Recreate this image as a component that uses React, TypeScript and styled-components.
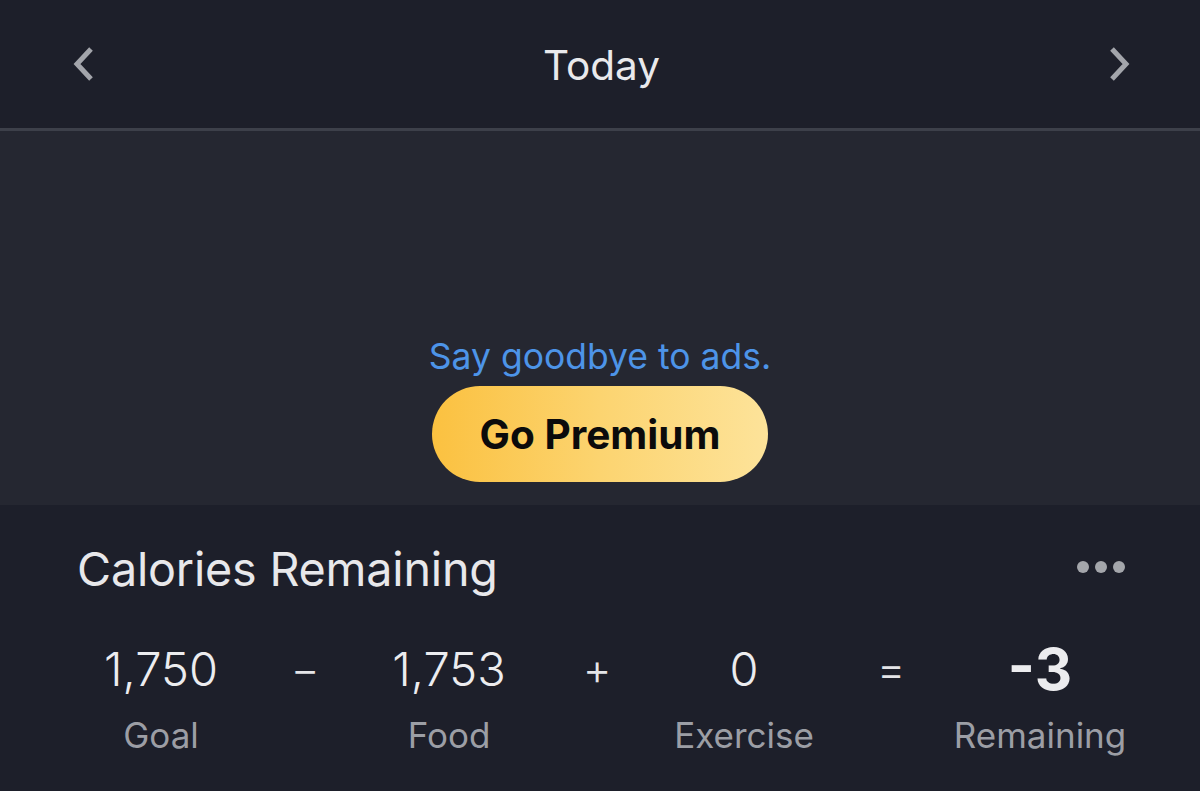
import React from 'react';
import styled, { createGlobalStyle } from 'styled-components';

const GlobalStyle = createGlobalStyle`
  html, body {
    margin: 0;
    padding: 0;
    background: #1d1f2a;
    font-family: Inter, 'Noto Sans', sans-serif;
  }
`;

const Page = styled.div`
  width: 1200px;
  height: 791px;
  overflow: hidden;
  background: #1d1f2a;
  display: flex;
  flex-direction: column;
`;

const TopBar = styled.div`
  height: 128px;
  display: flex;
  align-items: center;
  justify-content: space-between;
  padding: 0 57px 0 60px;
  border-bottom: solid 3px #3d404a;
  box-sizing: content-box;
`;

const NavButton = styled.button`
  width: 48px;
  height: 48px;
  padding: 0;
  border: none;
  background: none;
  display: flex;
  align-items: center;
  justify-content: center;
  color: #a3a5ab;
`;

const Title = styled.div`
  color: #e9e9ec;
  font-size: 40.5px;
  font-weight: 400;
  margin-top: 2px;
`;

const AdArea = styled.div`
  height: 374px;
  background: #252731;
  display: flex;
  flex-direction: column;
  align-items: center;
  justify-content: flex-end;
  padding-bottom: 23px;
  box-sizing: border-box;
`;

const AdText = styled.div`
  color: #4d94e8;
  font-size: 35.5px;
  margin-bottom: 8px;
`;

const PremiumButton = styled.button`
  width: 336px;
  height: 96px;
  border: none;
  border-radius: 48px;
  background: linear-gradient(90deg, #fbc140 0%, #fcd470 50%, #fde39a 100%);
  color: #0b0b0b;
  font-family: Inter, 'Noto Sans', sans-serif;
  font-size: 40.5px;
  font-weight: 700;
`;

const Summary = styled.div`
  padding: 36px 75px 0 77px;
`;

const SummaryHeader = styled.div`
  display: flex;
  align-items: center;
  justify-content: space-between;
`;

const Heading = styled.div`
  color: #e8e8eb;
  font-size: 46.7px;
  font-weight: 400;
  letter-spacing: -0.2px;
`;

const Dots = styled.div`
  display: flex;
  gap: 6px;
  margin-top: -5px;
`;

const Dot = styled.span`
  width: 12px;
  height: 12px;
  border-radius: 50%;
  background: #a4a6ab;
`;

const Equation = styled.div`
  display: grid;
  grid-template-columns: 146px 142px 146px 150px 144px 150px 148px;
  margin: 37px 0 0 11px;
`;

const Cell = styled.div`
  display: flex;
  flex-direction: column;
  align-items: center;
`;

const Value = styled.div<{ $strong?: boolean }>`
  color: #ececef;
  font-size: ${(p) => (p.$strong ? '58px' : '47px')};
  font-weight: ${(p) => (p.$strong ? 700 : 300)};
  line-height: 70px;
  height: 70px;
`;

const Label = styled.div`
  color: #9c9ea5;
  font-size: 35px;
  font-weight: 400;
  margin-top: 10px;
`;

const Operator = styled.div`
  color: #e4e4e7;
  font-size: 44px;
  font-weight: 300;
  line-height: 70px;
  text-align: center;
`;

const Chevron = ({ dir }: { dir: 'left' | 'right' }) => (
  <svg width="24" height="40" viewBox="0 0 24 40" fill="none">
    <path
      d={dir === 'left' ? 'M19 5 L5 20 L19 35' : 'M5 5 L19 20 L5 35'}
      stroke="currentColor"
      strokeWidth="5"
      strokeLinecap="butt"
      strokeLinejoin="miter"
    />
  </svg>
);

const items = [
  { value: '1,750', label: 'Goal' },
  { op: '−' },
  { value: '1,753', label: 'Food' },
  { op: '+' },
  { value: '0', label: 'Exercise' },
  { op: '=' },
  { value: '-3', label: 'Remaining', strong: true },
];

export default function App() {
  return (
    <Page>
      <GlobalStyle />
      <TopBar>
        <NavButton>
          <Chevron dir="left" />
        </NavButton>
        <Title>Today</Title>
        <NavButton>
          <Chevron dir="right" />
        </NavButton>
      </TopBar>
      <AdArea>
        <AdText>Say goodbye to ads.</AdText>
        <PremiumButton>Go Premium</PremiumButton>
      </AdArea>
      <Summary>
        <SummaryHeader>
          <Heading>Calories Remaining</Heading>
          <Dots>
            <Dot />
            <Dot />
            <Dot />
          </Dots>
        </SummaryHeader>
        <Equation>
          {items.map((item, index) =>
            item.op ? (
              <Operator key={index}>{item.op}</Operator>
            ) : (
              <Cell key={index}>
                <Value $strong={item.strong}>{item.value}</Value>
                <Label>{item.label}</Label>
              </Cell>
            )
          )}
        </Equation>
      </Summary>
    </Page>
  );
}
